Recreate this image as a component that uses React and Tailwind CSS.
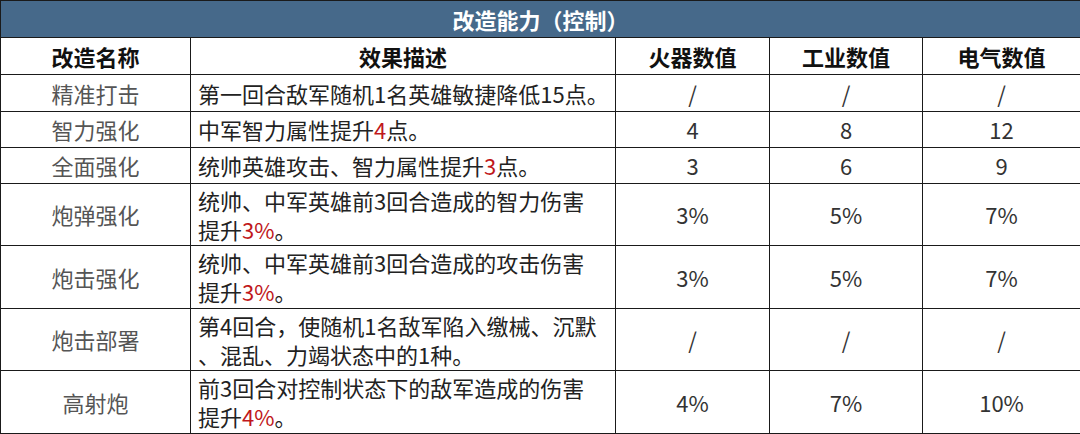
const rows = [
  { name: "精准打击", desc: ["第一回合敌军随机1名英雄敏捷降低15点。"], v: ["/", "/", "/"], h: "h-[37px]" },
  { name: "智力强化", desc: ["中军智力属性提升", <R key="r">4</R>, "点。"], v: ["4", "8", "12"], h: "h-[36px]" },
  { name: "全面强化", desc: ["统帅英雄攻击、智力属性提升", <R key="r">3</R>, "点。"], v: ["3", "6", "9"], h: "h-[36px]" },
  { name: "炮弹强化", desc: ["统帅、中军英雄前3回合造成的智力伤害", <br key="b" />, "提升", <R key="r">3%</R>, "。"], v: ["3%", "5%", "7%"], h: "h-[62px]" },
  { name: "炮击强化", desc: ["统帅、中军英雄前3回合造成的攻击伤害", <br key="b" />, "提升", <R key="r">3%</R>, "。"], v: ["3%", "5%", "7%"], h: "h-[63px]" },
  { name: "炮击部署", desc: ["第4回合，使随机1名敌军陷入缴械、沉默", <br key="b" />, "、混乱、力竭状态中的1种。"], v: ["/", "/", "/"], h: "h-[62px]" },
  { name: "高射炮", desc: ["前3回合对控制状态下的敌军造成的伤害", <br key="b" />, "提升", <R key="r">4%</R>, "。"], v: ["4%", "7%", "10%"], h: "h-[63px]" },
];

function R({ children }) {
  return <span className="text-[#c0171b]">{children}</span>;
}

export default function App() {
  return (
    <div className="w-[1080px] h-[434px] bg-white overflow-hidden" style={{ fontFamily: '"Microsoft YaHei", "Noto Sans CJK SC", "Noto Sans", sans-serif' }}>
      <table className="w-[1080px] border-collapse table-fixed text-[22px] leading-[29px]">
        <colgroup>
          <col className="w-[190px]" />
          <col className="w-[425px]" />
          <col className="w-[154px]" />
          <col className="w-[153px]" />
          <col className="w-[158px]" />
        </colgroup>
        <thead>
          <tr className="h-[37px]">
            <th colSpan={5} className="bg-[#46698a] text-white font-bold border-[1.5px] border-[#1a1a1a] text-center">
              改造能力（控制）
            </th>
          </tr>
          <tr className="h-[37px]">
            {["改造名称", "效果描述", "火器数值", "工业数值", "电气数值"].map((t) => (
              <th key={t} className="font-bold text-[#111] border-[1.5px] border-[#1a1a1a] text-center">{t}</th>
            ))}
          </tr>
        </thead>
        <tbody>
          {rows.map((r) => (
            <tr key={r.name} className={r.h}>
              <td className="border-[1.5px] border-[#1a1a1a] text-center text-[#555]">{r.name}</td>
              <td className="border-[1.5px] border-[#1a1a1a] text-left text-[#222] pl-[7px] whitespace-nowrap overflow-hidden align-middle">{r.desc}</td>
              {r.v.map((x, i) => (
                <td key={i} className="border-[1.5px] border-[#1a1a1a] text-center text-[#333]">{x}</td>
              ))}
            </tr>
          ))}
        </tbody>
      </table>
    </div>
  );
}
